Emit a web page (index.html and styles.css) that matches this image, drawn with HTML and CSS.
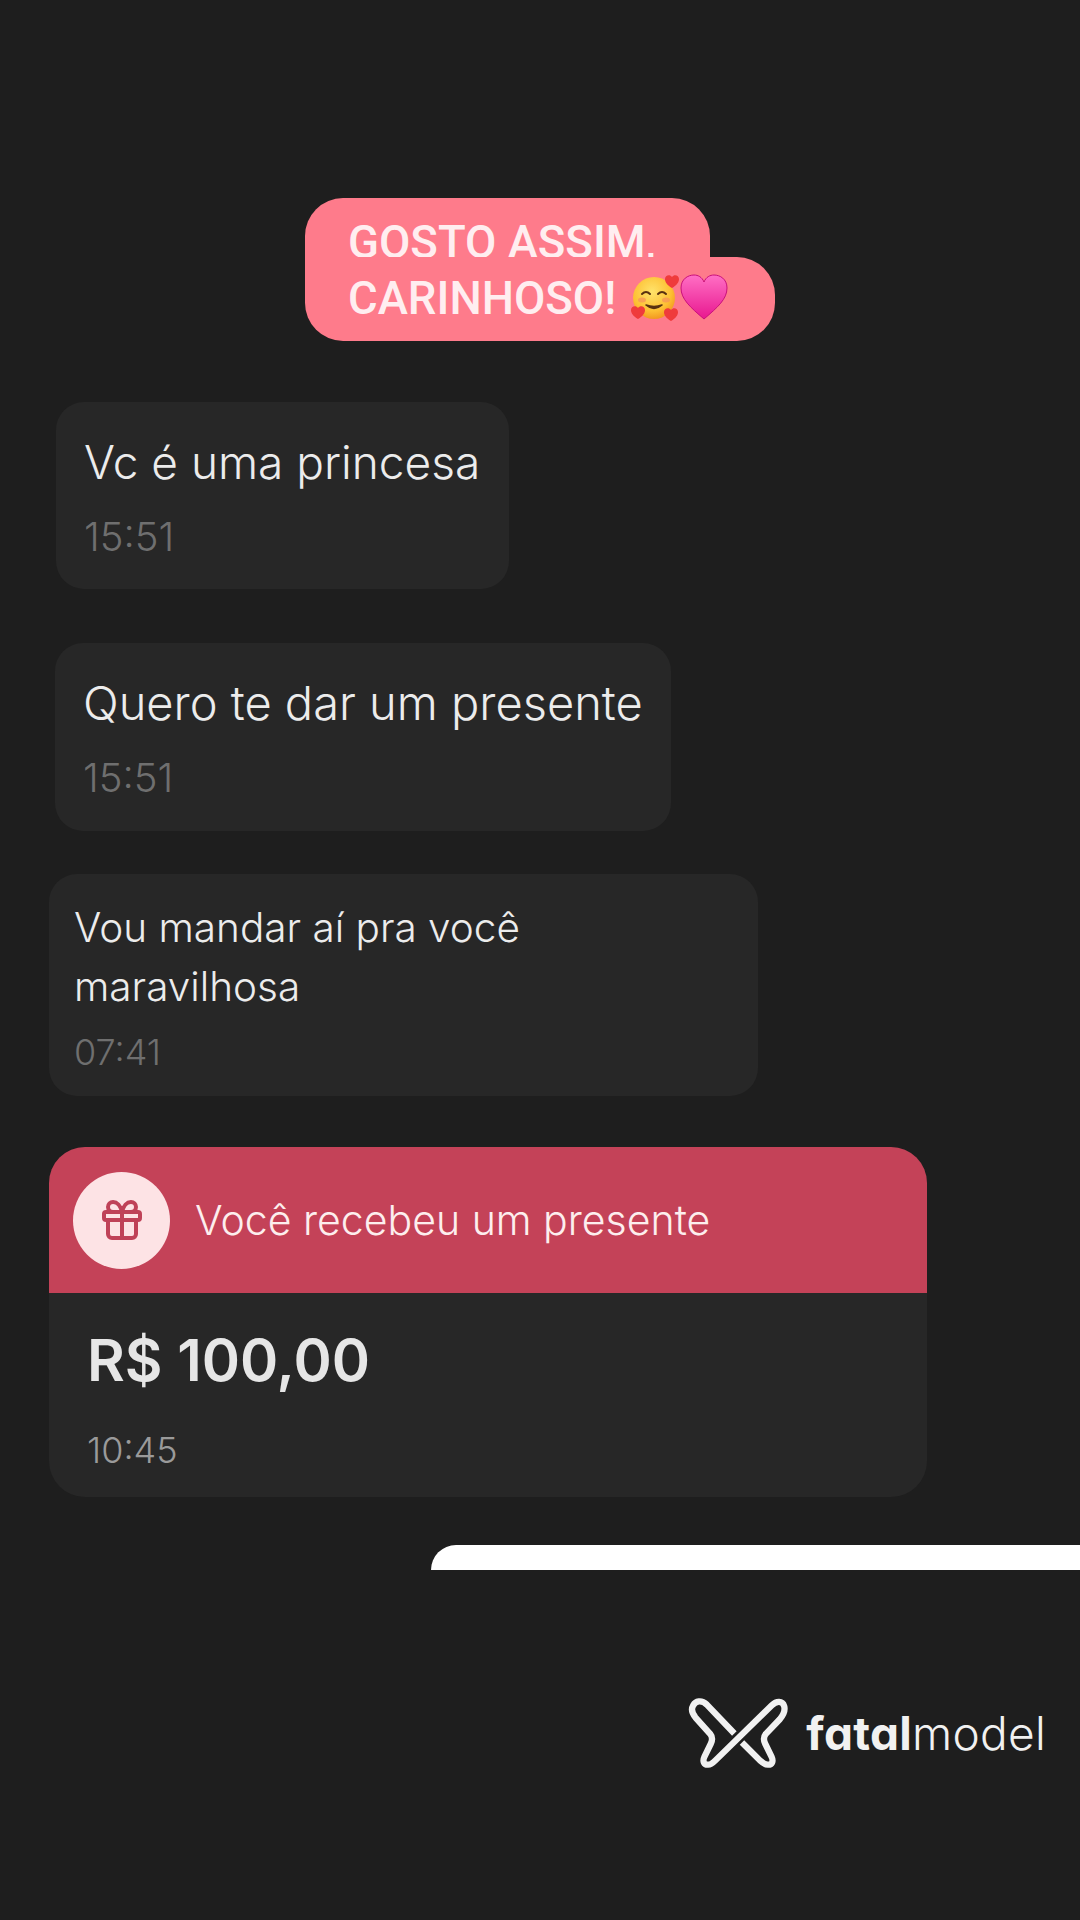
FILE: index.html
```html
<!DOCTYPE html>
<html lang="pt-BR">
<head>
    <meta charset="UTF-8">
    <meta name="viewport" content="width=device-width, initial-scale=1.0">
    <title>Você recebeu um presente</title>
    <link rel="stylesheet" href="styles.css">
</head>
<body>
    <main class="story">
        <h1 class="caption">
            <span class="caption-line caption-first">GOSTO ASSIM,</span>
            <span class="caption-line caption-second">CARINHOSO!
                <svg class="emoji emoji-face" viewBox="0 0 48 46" aria-hidden="true">
                    <defs>
                        <radialGradient id="faceFill" cx="45%" cy="35%" r="70%">
                            <stop offset="0" stop-color="#ffe36b"/>
                            <stop offset="0.65" stop-color="#fdc033"/>
                            <stop offset="1" stop-color="#f08f1c"/>
                        </radialGradient>
                    </defs>
                    <circle cx="23" cy="24" r="21" fill="url(#faceFill)"/>
                    <path d="M11 20q4-4 8 0M27 20q4-4 8 0" fill="none" stroke="#5a3210" stroke-width="2" stroke-linecap="round"/>
                    <path d="M15 31q8 7 16 0q-8 3-16 0z" fill="#5a3210" stroke="#5a3210" stroke-width="1.6" stroke-linejoin="round"/>
                    <ellipse cx="11" cy="26" rx="4" ry="2.5" fill="#f6925a" opacity="0.7"/>
                    <ellipse cx="35" cy="26" rx="4" ry="2.5" fill="#f6925a" opacity="0.7"/>
                    <path class="mini-heart" d="M41 14c-5-3-7-6-7-9c0-4 5-5 7-2c2-3 7-2 7 2c0 3-2 6-7 9z"/>
                    <path class="mini-heart" d="M7 45c-5-3-7-6-7-9c0-4 5-5 7-2c2-3 7-2 7 2c0 3-2 6-7 9z"/>
                    <path class="mini-heart" d="M40 47c-5-3-7-6-7-9c0-4 5-5 7-2c2-3 7-2 7 2c0 3-2 6-7 9z"/>
                </svg><svg class="emoji emoji-heart" viewBox="0 0 48 46" aria-hidden="true">
                    <defs>
                        <linearGradient id="heartFill" x1="0" y1="0" x2="0" y2="1">
                            <stop offset="0" stop-color="#ff6fc4"/>
                            <stop offset="1" stop-color="#e8178f"/>
                        </linearGradient>
                    </defs>
                    <path d="M24 45C10 33 1 25 1 14C1 5 8 1 14 1c4 0 8 2 10 7c2-5 6-7 10-7c6 0 13 4 13 13c0 11-9 19-23 31z" fill="url(#heartFill)" stroke="#c9107c" stroke-width="1"/>
                </svg></span>
        </h1>

        <div class="message message-first">
            <p class="message-text">Vc é uma princesa</p>
            <time class="message-time">15:51</time>
        </div>

        <div class="message message-second">
            <p class="message-text">Quero te dar um presente</p>
            <time class="message-time">15:51</time>
        </div>

        <div class="message message-small">
            <p class="message-text">Vou mandar aí pra você<br>maravilhosa</p>
            <time class="message-time">07:41</time>
        </div>

        <section class="gift">
            <header class="gift-head">
                <span class="gift-icon">
                    <svg viewBox="0 0 24 24" fill="none" stroke="currentColor" stroke-width="2" stroke-linecap="round" stroke-linejoin="round" aria-hidden="true">
                        <rect x="3" y="8" width="18" height="4" rx="1"/>
                        <path d="M12 8v13"/>
                        <path d="M19 12v7a2 2 0 0 1-2 2H7a2 2 0 0 1-2-2v-7"/>
                        <path d="M7.5 8a2.5 2.5 0 0 1 0-5A4.8 8 0 0 1 12 8a4.8 8 0 0 1 4.5-5 2.5 2.5 0 0 1 0 5"/>
                    </svg>
                </span>
                <span class="gift-title">Você recebeu um presente</span>
            </header>
            <div class="gift-body">
                <strong class="gift-value">R$ 100,00</strong>
                <time class="gift-time">10:45</time>
            </div>
        </section>

        <div class="reply-bar"></div>

        <footer class="brand">
            <svg class="brand-mark" viewBox="50 72 312 223" fill="none" stroke="#f1f1f1" stroke-width="19" stroke-linejoin="round" aria-hidden="true">
                <path d="M195 185L112 98C95 82 78 88 71 100C64 112 68 125 78 137L122 186C130 196 130 204 124 216L105 255C98 270 104 279 115 279C124 280 130 274 138 266L308 100C322 86 340 86 345 102C350 118 342 130 332 142L290 186C282 196 282 204 288 216L307 255C314 270 308 279 297 279C288 280 281 274 272 266L218 212"/>
            </svg>
            <span class="brand-name"><b>fatal</b>model</span>
        </footer>
    </main>
</body>
</html>
```

FILE: styles.css
```css
body {
    margin: 0;
    background-color: #1e1e1e;
    font-family: Inter, "Noto Sans", sans-serif;
}

.story {
    height: 1920px;
    overflow: hidden;
    padding-top: 198px;
    box-sizing: border-box;
    display: flex;
    flex-direction: column;
    align-items: flex-start;
}

/* Legenda rosa */
.caption {
    margin: 0 0 61px 305px;
    display: flex;
    flex-direction: column;
    align-items: flex-start;
    font-family: Roboto, sans-serif;
    font-size: 45.5px;
    font-weight: 500;
    line-height: 57px;
    color: #ffeef0;
}

.caption-line {
    display: block;
    background-color: #fe7b8b;
    padding-left: 43px;
    box-sizing: border-box;
}

.caption-first {
    width: 405px;
    height: 66px;
    padding-top: 16px;
    border-radius: 38px 38px 0 0;
}

.caption-second {
    width: 470px;
    height: 84px;
    margin-top: -7px;
    padding-top: 13px;
    border-radius: 0 38px 38px 38px;
    white-space: nowrap;
}

.emoji {
    width: 48px;
    height: 46px;
    vertical-align: -6px;
}

.emoji-face {
    margin-left: 3px;
    margin-right: 1px;
    overflow: visible;
}

.mini-heart {
    fill: #ef3b3b;
}

/* Mensagens */
.message {
    background-color: #272727;
    box-sizing: border-box;
    border-radius: 28px;
    color: #ececec;
    font-weight: 300;
}

.message-text {
    margin: 0;
}

.message-time {
    display: block;
    color: #6f6f6f;
}

.message-first,
.message-second {
    padding: 27px 28px 0;
    line-height: 66px;
}

.message-first {
    width: 453px;
    height: 187px;
    margin: 0 0 54px 56px;
    font-size: 46px;
}

.message-second {
    width: 616px;
    height: 188px;
    margin: 0 0 43px 55px;
    font-size: 47px;
}

.message-first .message-time,
.message-second .message-time {
    margin-top: 17px;
    font-size: 40px;
    line-height: 50px;
}

.message-small {
    width: 709px;
    height: 222px;
    margin: 0 0 51px 49px;
    padding: 24px 25px 0;
    font-size: 40.5px;
    line-height: 59px;
}

.message-small .message-time {
    margin-top: 13px;
    font-size: 36px;
    line-height: 46px;
}

/* Cartão do presente */
.gift {
    width: 878px;
    height: 350px;
    margin: 0 0 48px 49px;
    border-radius: 36px;
    overflow: hidden;
    background-color: #272727;
}

.gift-head {
    height: 146px;
    display: flex;
    align-items: center;
    gap: 25px;
    padding-left: 24px;
    background-color: #c44258;
}

.gift-icon {
    width: 97px;
    height: 97px;
    border-radius: 50%;
    background-color: #fde3e5;
    color: #bf4258;
    display: flex;
    align-items: center;
    justify-content: center;
}

.gift-icon svg {
    width: 48px;
    height: 48px;
}

.gift-title {
    font-size: 41px;
    font-weight: 300;
    color: #fdeeee;
}

.gift-body {
    padding: 31px 38px 0;
}

.gift-value {
    display: block;
    font-size: 58px;
    font-weight: 600;
    line-height: 72px;
    color: #e6e6e6;
}

.gift-time {
    display: block;
    margin-top: 32px;
    font-size: 36px;
    font-weight: 300;
    line-height: 44px;
    color: #9a9a9a;
}

/* Barra branca cortada */
.reply-bar {
    align-self: flex-end;
    width: 649px;
    height: 25px;
    margin-bottom: 126px;
    border-radius: 25px 0 0 0;
    background-color: #fff;
}

/* Marca */
.brand {
    align-self: flex-end;
    display: flex;
    align-items: center;
    gap: 16px;
    margin-right: 34px;
}

.brand-mark {
    width: 104px;
    height: 74px;
}

.brand-name {
    font-size: 46px;
    font-weight: 300;
    letter-spacing: 0.3px;
    color: #f1f1f1;
    font-feature-settings: "cv11";
}

.brand-name b {
    font-weight: 700;
}
```
